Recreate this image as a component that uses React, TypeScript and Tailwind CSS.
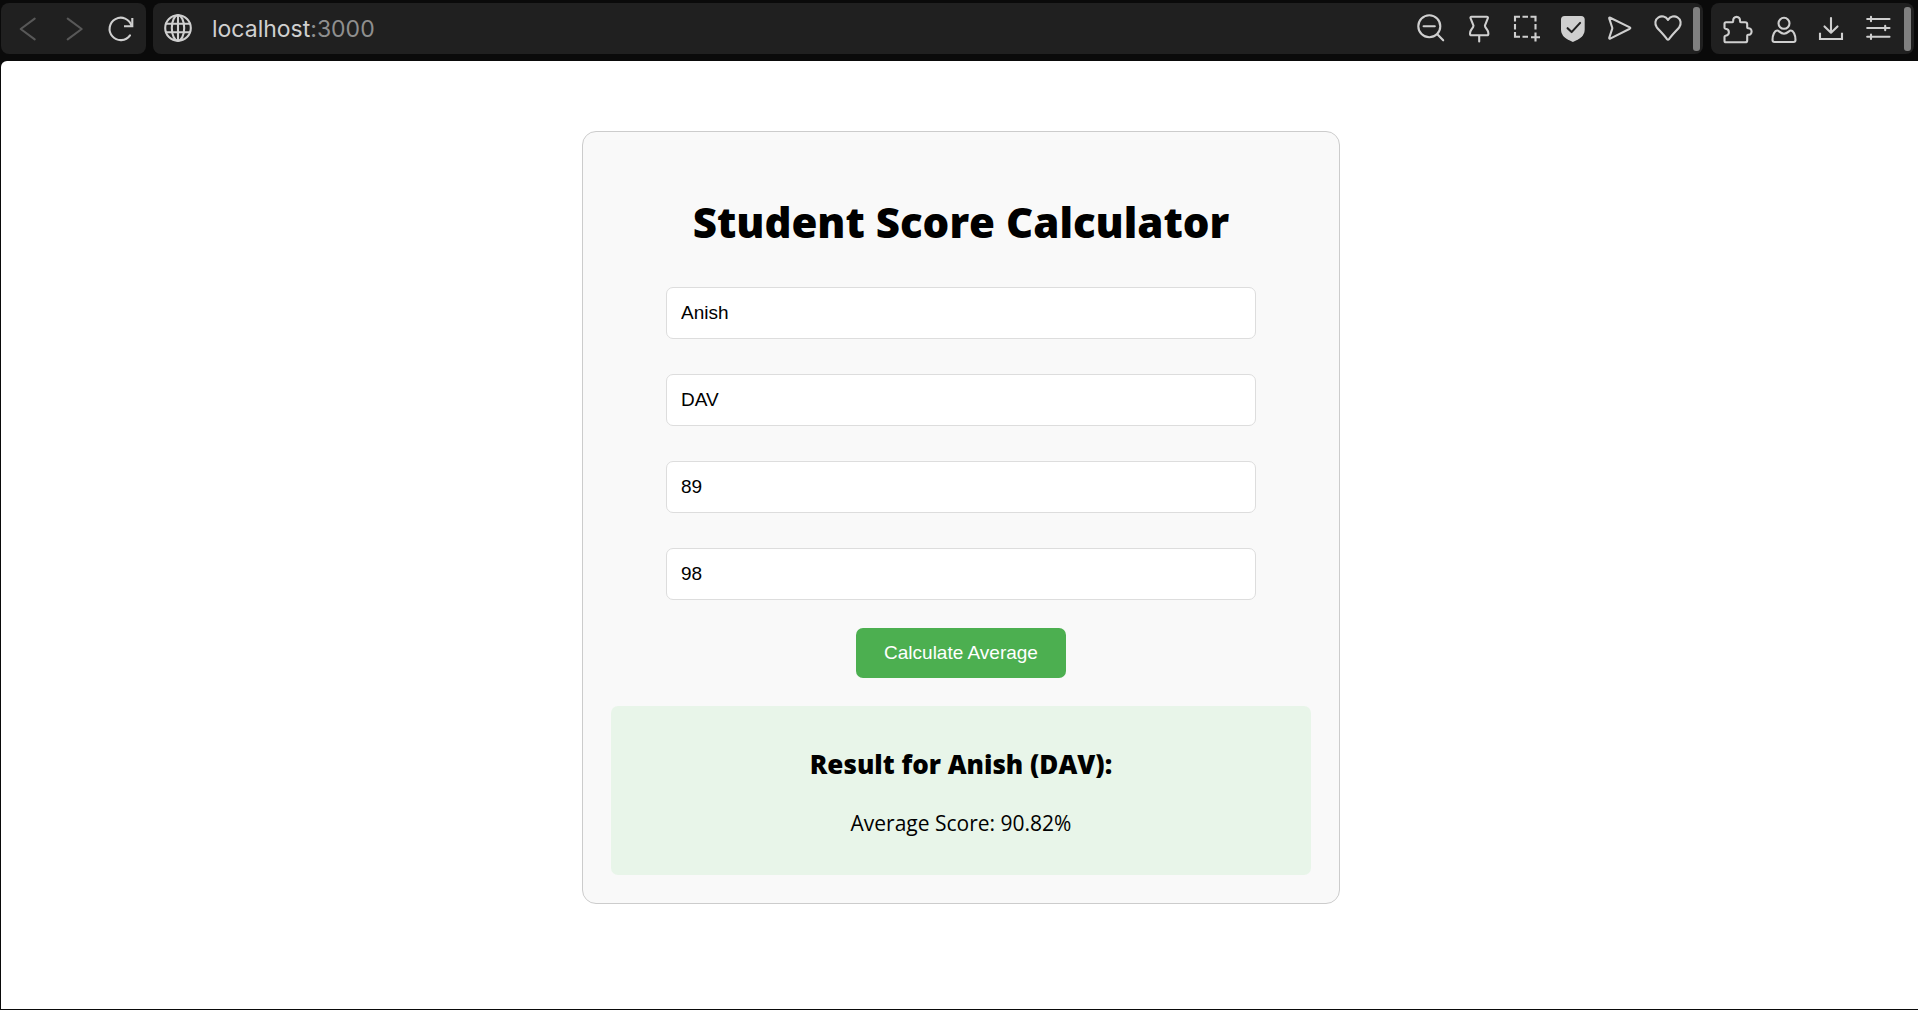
import { useState } from "react";
import type { ReactNode } from "react";

function Icon({ children }: { children: ReactNode }) {
  return (
    <svg
      className="block h-[29px] w-[29px] overflow-visible"
      viewBox="0 0 29 29"
      fill="none"
      stroke="currentColor"
      strokeWidth="2.1"
      strokeLinecap="round"
      strokeLinejoin="round"
      aria-hidden="true"
    >
      {children}
    </svg>
  );
}

function ToolButton({ label, disabled, children }: { label: string; disabled?: boolean; children: ReactNode }) {
  return (
    <button type="button" aria-label={label} disabled={disabled} className="shrink-0 text-[#cfcfcf] disabled:text-[#585858]">
      <Icon>{children}</Icon>
    </button>
  );
}

function Grip() {
  return <div className="ml-2.5 h-11 w-[7px] shrink-0 rounded-[3px] bg-[#808080]" />;
}

function BrowserBar() {
  return (
    <header className="flex gap-[7px] bg-[#0a0a0a] pt-[3px] pr-1 pb-[7px] pl-px">
      <nav aria-label="History" className="flex h-[51px] items-center gap-[18px] rounded-lg bg-[#202020] pr-[9px] pl-[13px]">
        <ToolButton label="Back" disabled>
          <path d="M20.7 4.7 6.7 15l14 10.3" />
        </ToolButton>
        <ToolButton label="Forward" disabled>
          <path d="m6.7 4.7 14 10.3-14 10.3" />
        </ToolButton>
        <ToolButton label="Reload">
          <path d="M22 21.3A11.2 11.2 0 1 1 23.6 12" />
          <path d="M24.3 3.9v8.4H16" strokeLinecap="butt" strokeLinejoin="miter" />
        </ToolButton>
      </nav>

      <div className="flex h-[51px] flex-1 items-center rounded-lg bg-[#202020] pr-[3px] pl-[11px]">
        <ToolButton label="Site information">
          <circle cx="14" cy="14" r="12.8" />
          <ellipse cx="14" cy="14" rx="6.2" ry="12.8" />
          <path d="M14 1.2v25.6M2 9.8h24M2 18.2h24" />
        </ToolButton>
        <button type="button" className="ml-[19px] flex-1 text-left font-['Inter',sans-serif] text-[23px] leading-7 text-[#d0d0d0]">
          localhost<span className="text-[#8f8f8f]">:3000</span>
        </button>
        <div className="flex items-center gap-[18px]">
          <ToolButton label="Zoom out">
            <circle cx="10.3" cy="12.3" r="11" />
            <path d="M4.6 12.3h11.2M18.3 20.3l5.9 6" />
          </ToolButton>
          <ToolButton label="Pin page">
            <path d="M5.6 2.7h15.2c1 0 1.4.8 1 1.7l-2.9 7.2c0 1.5 1 2.6 2.2 4.2 1 1.1 1.3 2.6 1.3 4 0 1-.5 1.5-1.4 1.5H5.4c-.9 0-1.4-.5-1.4-1.5 0-1.4.3-2.9 1.3-4 1.2-1.6 2.2-2.7 2.2-4.2L4.6 4.4c-.4-.9 0-1.7 1-1.7zM13.2 21.3v6.2" />
          </ToolButton>
          <ToolButton label="Capture area">
            <path
              strokeLinecap="butt"
              strokeLinejoin="miter"
              d="M2 7.5V2.700h5M9.500 2.700H15M17.500 2.700h5v4.800M2 10v5.500M2 18v4.700h5M9.500 22.700H15M22.500 10v5.500M22.500 18.500v9M18 23.200h9"
            />
          </ToolButton>
          <ToolButton label="Protection enabled">
            <path fill="currentColor" stroke="none" d="M4.500 2h16.700c2.200 0 3.500 1.300 3.500 3.500v9.700c0 4.500-2.400 7.800-6.700 10.300L12.900 28l-5.200-2.500C3.400 23 1 19.700 1 15.200V5.500C1 3.300 2.300 2 4.500 2z" />
            <path stroke="#202020" d="m7.600 14.200 4 3.900 8.500-9.200" />
          </ToolButton>
          <ToolButton label="Send">
            <path d="M2.200 4.400c-.2-.7.400-1 1-.7l19.600 9.700c.7.400.7.900 0 1.300L3.200 24.600c-.6.300-1.200 0-1-.7L5.200 14.800a2 2 0 0 0 0-1.300z" />
          </ToolButton>
          <ToolButton label="Bookmark">
            <path d="M14 5.800C16.300 2.300 20.400 1.500 23.500 3.300 27 5.400 27.600 10 25.200 13.300 23.600 15.500 18 20.800 15 25.200c-.6.800-1.400.8-2 0C10 20.800 4.400 15.500 2.800 13.300.4 10 1 5.400 4.500 3.300 7.600 1.500 11.700 2.300 14 5.800z" />
          </ToolButton>
        </div>
        <Grip />
      </div>

      <div className="ml-px flex h-[51px] items-center rounded-lg bg-[#202020] pr-[3px] pl-[13px]">
        <div className="flex items-center gap-[18px]">
          <ToolButton label="Extensions">
            <path d="M2 8.200h6.300c.7 0 1-.4.900-1C8.900 4.500 10.400 2.900 12.600 2.900s3.700 1.600 3.400 4.300c-.1.600.2 1 .9 1h4.300c1.200 0 2 .8 2 2v3.100c0 .700.400 1 1 .9 2-.1 3.400 1.100 3.400 3.200s-1.400 3.500-3.400 3.400c-.6-.1-1 .2-1 .9v4.800c0 1.200-.8 1.800-2 1.800H2c-1 0-1.500-.6-1.500-1.600v-4c0-.6.400-.9 1-1C3.700 21.400 4.900 20 4.900 18.200S3.700 15 1.500 14.800c-.6-.1-1-.4-1-1V9.700c0-1 .5-1.500 1.500-1.500z" />
          </ToolButton>
          <ToolButton label="Profile">
            <circle cx="13" cy="9.300" r="5.500" />
            <path d="M6.300 16.500c1.700 0 3 3.200 6.700 3.200s5-3.200 6.700-3.200c2.600 0 4.800 4.300 4.800 9.500 0 1.400-.6 2-2 2h-19c-1.400 0-2-.6-2-2 0-5.200 2.200-9.500 4.800-9.500z" />
          </ToolButton>
          <ToolButton label="Downloads">
            <path d="M13 4v14.500M6.500 12.400l6.500 6.300 6.500-6.300" />
            <path d="M2 18.700V25h22v-6.300" strokeLinecap="butt" strokeLinejoin="miter" />
          </ToolButton>
          <ToolButton label="Settings">
            <path d="M2.200 5h22.300M2.200 14h22.300M2.200 22.800h22.300M6 2.800v4.400M20.200 11.800v4.400M6 20.600V25" />
          </ToolButton>
        </div>
        <Grip />
      </div>
    </header>
  );
}

const fields = [
  { id: "name", label: "Name", value: "Anish" },
  { id: "school", label: "School", value: "DAV" },
  { id: "total", label: "Total score", value: "89" },
  { id: "goal", label: "Goal score", value: "98" },
];

function ScoreCalculator() {
  const [values, setValues] = useState<Record<string, string>>(
    Object.fromEntries(fields.map((f) => [f.id, f.value])),
  );

  return (
    <section className="mx-auto w-full max-w-[758px] rounded-[14px] border border-[#cccccc] bg-[#f9f9f9] p-7 text-center">
      <h1 className="mt-8 text-[42px] leading-[60px] font-extrabold">Student Score Calculator</h1>
      <form className="mx-auto mt-[35px] max-w-[590px]" onSubmit={(e) => e.preventDefault()}>
        <div className="flex flex-col gap-[35px]">
          {fields.map((f) => (
            <input
              key={f.id}
              id={f.id}
              type="text"
              aria-label={f.label}
              value={values[f.id]}
              onChange={(e) => setValues({ ...values, [f.id]: e.target.value })}
              className="block h-[52px] w-full rounded-[7px] border border-[#dddddd] bg-white px-3.5 font-['Liberation_Sans',sans-serif] text-[19px] text-black outline-none"
            />
          ))}
        </div>
        <button
          type="submit"
          className="mt-7 h-[50px] rounded-[7px] bg-[#4caf50] px-7 font-['Liberation_Sans',sans-serif] text-[19px] text-white"
        >
          Calculate Average
        </button>
      </form>
      <div className="mt-7 rounded-[7px] bg-[#e8f5e9] px-7 pt-[41px] pb-[36px]">
        <h3 className="text-[26px] leading-[34px] font-extrabold">Result for Anish (DAV):</h3>
        <p className="mt-[26px] text-[21px] leading-8">Average Score: 90.82%</p>
      </div>
    </section>
  );
}

export default function App() {
  return (
    <div className="flex min-h-screen flex-col bg-[#0a0a0a]">
      <BrowserBar />
      <main className="mb-px ml-px flex-1 rounded-tl-md bg-white py-[70px] pr-4 pl-[19px] font-['Open_Sans',sans-serif] text-black">
        <ScoreCalculator />
      </main>
    </div>
  );
}
